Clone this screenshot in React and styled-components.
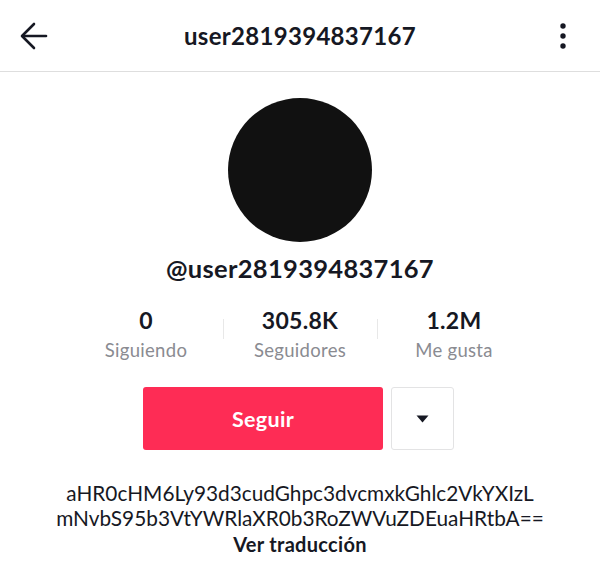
import React from "react";
import styled, { createGlobalStyle } from "styled-components";

const Global = createGlobalStyle`
  html, body { margin: 0; padding: 0; background: #fff; }
  body { font-family: Lato, "Open Sans", sans-serif; color: #161823; }
`;

const Page = styled.div`
  width: 600px;
  height: 575px;
  overflow: hidden;
  display: flex;
  flex-direction: column;
`;

const Header = styled.header`
  height: 72px;
  box-sizing: border-box;
  border-bottom: 1px solid #dedede;
  display: grid;
  grid-template-columns: 70px 1fr 70px;
  align-items: center;
`;

const IconSlot = styled.div`
  display: flex;
  justify-content: ${(p) => p.$align};
  padding: ${(p) => p.$pad};
`;

const Title = styled.h1`
  margin: 0;
  text-align: center;
  font-size: 24px;
  font-weight: 700;
  letter-spacing: 0.3px;
  color: #161823;
`;

const Profile = styled.section`
  display: flex;
  flex-direction: column;
  align-items: center;
  padding-top: 26px;
`;

const Avatar = styled.div`
  width: 144px;
  height: 144px;
  border-radius: 50%;
  background: #111;
`;

const Handle = styled.div`
  margin-top: 11px;
  font-size: 25.5px;
  font-weight: 700;
  line-height: 30px;
  letter-spacing: 0.3px;
`;

const Stats = styled.div`
  margin-top: 24px;
  display: flex;
  align-items: flex-start;
`;

const Stat = styled.div`
  width: 153px;
  display: flex;
  flex-direction: column;
  align-items: center;
`;

const Divider = styled.div`
  width: 1px;
  height: 20px;
  background: #e8e8e8;
  margin-top: 12px;
`;

const Num = styled.div`
  font-size: 23px;
  font-weight: 700;
  line-height: 26px;
  letter-spacing: 0.3px;
`;

const Label = styled.div`
  margin-top: 6px;
  font-size: 18.5px;
  line-height: 22px;
  color: #8a8b91;
  letter-spacing: 0.3px;
`;

const Actions = styled.div`
  margin-top: 26px;
  display: flex;
  gap: 8px;
  margin-right: 3px;
`;

const FollowButton = styled.button`
  width: 240px;
  height: 63px;
  border: none;
  border-radius: 3px;
  background: #fe2c55;
  color: #fff;
  font-family: inherit;
  font-size: 21.5px;
  font-weight: 700;
  letter-spacing: 0.3px;
`;

const MoreButton = styled.button`
  width: 63px;
  height: 63px;
  box-sizing: border-box;
  border: 1px solid #e3e3e4;
  border-radius: 3px;
  background: #fff;
  display: flex;
  align-items: center;
  justify-content: center;
  padding: 0;
`;

const Bio = styled.div`
  margin-top: 31px;
  text-align: center;
  font-size: 20.8px;
  line-height: 24.5px;
  color: #161823;
`;

const Translate = styled.div`
  margin-top: 1px;
  font-size: 20px;
  font-weight: 700;
  line-height: 26px;
  text-align: center;
  letter-spacing: 0.3px;
`;

export default function App() {
  return (
    <Page>
      <Global />
      <Header>
        <IconSlot $align="flex-start" $pad="0 0 0 20px">
          <svg width="28" height="28" viewBox="0 0 28 28" fill="none" stroke="#161823" strokeWidth="2.6" strokeLinecap="round" strokeLinejoin="round">
            <path d="M26 14H3" />
            <path d="M14 2L2 14l12 12" />
          </svg>
        </IconSlot>
        <Title>user2819394837167</Title>
        <IconSlot $align="flex-end" $pad="0 34px 0 0">
          <svg width="6" height="26" viewBox="0 0 6 26" fill="#161823">
            <circle cx="3" cy="3" r="2.7" />
            <circle cx="3" cy="13" r="2.7" />
            <circle cx="3" cy="23" r="2.7" />
          </svg>
        </IconSlot>
      </Header>
      <Profile>
        <Avatar />
        <Handle>@user2819394837167</Handle>
        <Stats>
          <Stat>
            <Num>0</Num>
            <Label>Siguiendo</Label>
          </Stat>
          <Divider />
          <Stat>
            <Num>305.8K</Num>
            <Label>Seguidores</Label>
          </Stat>
          <Divider />
          <Stat>
            <Num>1.2M</Num>
            <Label>Me gusta</Label>
          </Stat>
        </Stats>
        <Actions>
          <FollowButton>Seguir</FollowButton>
          <MoreButton>
            <svg width="13" height="8" viewBox="0 0 13 8" fill="#161823">
              <path d="M0.5 0.5h12L6.5 7.5z" />
            </svg>
          </MoreButton>
        </Actions>
        <Bio>
          aHR0cHM6Ly93d3cudGhpc3dvcmxkGhlc2VkYXIzL
          <br />
          mNvbS95b3VtYWRlaXR0b3RoZWVuZDEuaHRtbA==
        </Bio>
        <Translate>Ver traducción</Translate>
      </Profile>
    </Page>
  );
}
